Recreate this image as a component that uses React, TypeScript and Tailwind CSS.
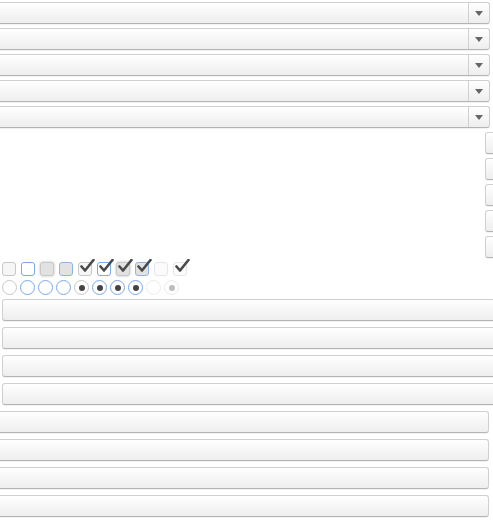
import React from 'react'

const btn =
  'h-[22px] rounded-[3px] border border-[#d0d0d0] border-b-[#b4b4b4] bg-gradient-to-b from-white to-[#eeeeee] shadow-[0_1px_1px_rgba(0,0,0,0.06)]'

function Select() {
  return (
    <div className={`${btn} flex w-[500px] -ml-[10px]`}>
      <div className="flex-1" />
      <div className="flex w-[21px] items-center justify-center border-l border-[#d0d0d0]">
        <svg width="8" height="5" viewBox="0 0 8 5">
          <path d="M0 0h8L4 5z" fill="#666" />
        </svg>
      </div>
    </div>
  )
}

function Check() {
  return (
    <svg className="absolute -top-[4px] left-[1px]" width="15" height="14" viewBox="0 0 15 14">
      <path d="M1.5 7.5l3.5 4L13.5 1" fill="none" stroke="#4a4a4a" strokeWidth="2.6" strokeLinecap="round" strokeLinejoin="round" />
    </svg>
  )
}

type Box = { border: string; bg: string; check?: boolean; glow?: boolean }

const boxes: Box[] = [
  { border: 'border-[#c8c8c8]', bg: 'bg-[#f6f6f6]' },
  { border: 'border-[#7aa9ea]', bg: 'bg-white' },
  { border: 'border-[#c8c8c8]', bg: 'bg-[#e2e2e2]', glow: true },
  { border: 'border-[#8db3ea]', bg: 'bg-[#e2e2e2]' },
  { border: 'border-[#c8c8c8]', bg: 'bg-[#f6f6f6]', check: true },
  { border: 'border-[#7aa9ea]', bg: 'bg-white', check: true },
  { border: 'border-[#c8c8c8]', bg: 'bg-[#e2e2e2]', check: true, glow: true },
  { border: 'border-[#8db3ea]', bg: 'bg-[#e2e2e2]', check: true },
  { border: 'border-[#e6e6e6]', bg: 'bg-[#fbfbfb]' },
  { border: 'border-[#e6e6e6]', bg: 'bg-[#fbfbfb]', check: true },
]

type Radio = { border: string; dot?: string }

const radios: Radio[] = [
  { border: 'border-[#c8c8c8]' },
  { border: 'border-[#7aa9ea]' },
  { border: 'border-[#7aa9ea]' },
  { border: 'border-[#7aa9ea]' },
  { border: 'border-[#c8c8c8]', dot: 'bg-[#444]' },
  { border: 'border-[#7aa9ea]', dot: 'bg-[#444]' },
  { border: 'border-[#7aa9ea]', dot: 'bg-[#444]' },
  { border: 'border-[#7aa9ea]', dot: 'bg-[#444]' },
  { border: 'border-[#ececec]' },
  { border: 'border-[#ececec]', dot: 'bg-[#bdbdbd]' },
]

export default function App() {
  return (
    <div className="relative h-[521px] w-[493px] overflow-hidden bg-white">
      <div className="flex flex-col gap-[4px] pt-[2px]">
        {[0, 1, 2, 3, 4].map((i) => (
          <Select key={i} />
        ))}
      </div>

      <div className="mt-[4px] flex flex-col items-end gap-[4px] -mr-[20px]">
        {[0, 1, 2, 3, 4].map((i) => (
          <div key={i} className={`${btn} w-[28px]`} />
        ))}
      </div>

      <div className="mt-[4px] flex gap-[5px] pl-[2px]">
        {boxes.map((b, i) => (
          <div
            key={i}
            className={`relative h-[14px] w-[14px] rounded-[3px] border ${b.border} ${b.bg} ${
              b.glow ? 'shadow-[0_0_3px_rgba(0,0,0,0.25)]' : ''
            }`}
          >
            {b.check && <Check />}
          </div>
        ))}
      </div>

      <div className="mt-[4px] flex gap-[3px] pl-[2px]">
        {radios.map((r, i) => (
          <div
            key={i}
            className={`flex h-[15px] w-[15px] items-center justify-center rounded-full border bg-white ${r.border}`}
          >
            {r.dot && <div className={`h-[6px] w-[6px] rounded-full ${r.dot}`} />}
          </div>
        ))}
      </div>

      <div className="mt-[4px] flex flex-col gap-[6px] pl-[2px]">
        {[0, 1, 2, 3].map((i) => (
          <div key={i} className={`${btn} w-[500px]`} />
        ))}
      </div>

      <div className="mt-[6px] flex flex-col gap-[6px]">
        {[0, 1, 2, 3].map((i) => (
          <div key={i} className={`${btn} -ml-[10px] w-[499px]`} />
        ))}
      </div>
    </div>
  )
}
